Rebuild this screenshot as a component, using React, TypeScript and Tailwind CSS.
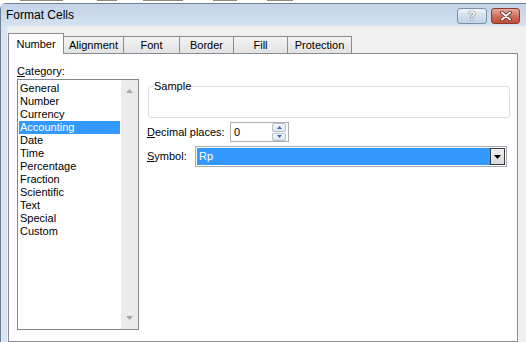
import React from "react";

const categories = [
  "General",
  "Number",
  "Currency",
  "Accounting",
  "Date",
  "Time",
  "Percentage",
  "Fraction",
  "Scientific",
  "Text",
  "Special",
  "Custom",
];

const tabs = [
  { label: "Alignment", width: "w-[60px]" },
  { label: "Font", width: "w-[56px]" },
  { label: "Border", width: "w-[54px]" },
  { label: "Fill", width: "w-[54px]" },
  { label: "Protection", width: "w-[64px]" },
];

// bits of the sheet behind the dialog, cut off by the window edge
const fragments = [
  { ml: "ml-[20px]", w: "w-[43px]" },
  { ml: "ml-[34px]", w: "w-[20px]" },
  { ml: "ml-[26px]", w: "w-[40px]" },
  { ml: "ml-[30px]", w: "w-[24px]" },
  { ml: "ml-[30px]", w: "w-[26px]" },
];

function TitleButtons() {
  return (
    <div className="ml-auto mr-[20px] mt-[4px] flex gap-[4px] self-start">
      <div className="flex h-[16px] w-[30px] items-center justify-center rounded-[3px] border border-[#7d8ea5] bg-gradient-to-b from-[#eef3f9] via-[#d3dfec] to-[#c1d2e6]">
        <span className="text-[12px] font-bold leading-none text-white [text-shadow:0_0_1px_#3b4a5e,0_0_1px_#3b4a5e]">
          ?
        </span>
      </div>
      <div className="flex h-[16px] w-[29px] items-center justify-center rounded-[3px] border border-[#8a3a31] bg-gradient-to-b from-[#e7a99f] via-[#d0705f] to-[#c24a38]">
        <svg width="12" height="10" viewBox="0 0 12 10">
          <path d="M2 1.5 L10 8.5 M10 1.5 L2 8.5" stroke="#5a2019" strokeWidth="3.6" strokeLinecap="round" />
          <path d="M2 1.5 L10 8.5 M10 1.5 L2 8.5" stroke="#ffffff" strokeWidth="2" strokeLinecap="round" />
        </svg>
      </div>
    </div>
  );
}

function ListBox() {
  return (
    <div className="mt-[1px] flex h-[251px] w-[122px] border border-[#828790] bg-white">
      <div className="flex flex-1 flex-col px-[1px] pt-[2px]">
        {categories.map((c) => (
          <div
            key={c}
            className={
              c === "Accounting"
                ? "h-[13px] bg-[#3399ff] pl-[1px] leading-[13px] text-white"
                : "h-[13px] pl-[1px] leading-[13px] text-black"
            }
          >
            {c}
          </div>
        ))}
      </div>
      <div className="flex w-[17px] flex-col items-center justify-between bg-[#ebebeb] py-[9px]">
        <svg width="7" height="4" viewBox="0 0 7 4">
          <path d="M0 4 L3.5 0 L7 4 Z" fill="#a7a7a7" />
        </svg>
        <svg width="7" height="4" viewBox="0 0 7 4">
          <path d="M0 0 L3.5 4 L7 0 Z" fill="#a7a7a7" />
        </svg>
      </div>
    </div>
  );
}

function Spinner() {
  return (
    <div className="mr-[2px] flex h-[18px] w-[14px] flex-col gap-[1px]">
      <div className="flex flex-1 items-center justify-center rounded-[2px] border border-[#b5c0cf] bg-gradient-to-b from-[#f4f7fb] to-[#dde5ef]">
        <svg width="5" height="3" viewBox="0 0 5 3">
          <path d="M0 3 L2.5 0 L5 3 Z" fill="#3e6bb0" />
        </svg>
      </div>
      <div className="flex flex-1 items-center justify-center rounded-[2px] border border-[#b5c0cf] bg-gradient-to-b from-[#f4f7fb] to-[#dde5ef]">
        <svg width="5" height="3" viewBox="0 0 5 3">
          <path d="M0 0 L2.5 3 L5 0 Z" fill="#3e6bb0" />
        </svg>
      </div>
    </div>
  );
}

function NumberPage() {
  return (
    <div className="flex pl-[8px] pt-[11px]">
      <div className="flex w-[122px] flex-col">
        <div className="h-[13px] leading-[13px]">
          <span className="underline underline-offset-1">C</span>ategory:
        </div>
        <ListBox />
      </div>

      <div className="ml-[8px] flex w-[363px] flex-col pt-[15px]">
        <fieldset className="ml-[1px] h-[38px] rounded-[3px] border border-[#d5dfe5] px-[5px]">
          <legend className="leading-[13px]">Sample</legend>
        </fieldset>

        <div className="mt-[4px] flex h-[20px] items-center">
          <div className="w-[83px] leading-[13px]">
            <span className="underline underline-offset-1">D</span>ecimal places:
          </div>
          <div className="flex h-[20px] w-[59px] items-center border border-[#abadb3] bg-white">
            <span className="flex-1 pl-[3px] leading-[13px]">0</span>
            <Spinner />
          </div>
        </div>

        <div className="mt-[4px] flex h-[21px] items-center">
          <div className="w-[48px] leading-[13px]">
            <span className="underline underline-offset-1">S</span>ymbol:
          </div>
          <div className="flex h-[21px] w-[312px] border border-[#a5acb5] bg-white p-[1px]">
            <div className="flex flex-1 items-center bg-[#3399ff] pl-[2px] leading-[13px] text-white">
              Rp
            </div>
            <div className="flex w-[15px] items-center justify-center border border-[#3c3c3c] bg-gradient-to-b from-[#f2f2f2] to-[#d9d9d9]">
              <svg width="7" height="4" viewBox="0 0 7 4">
                <path d="M0 0 L3.5 4 L7 0 Z" fill="#000000" />
              </svg>
            </div>
          </div>
        </div>
      </div>
    </div>
  );
}

export default function App() {
  return (
    <div className="flex h-[342px] w-[526px] flex-col overflow-hidden bg-white font-['Liberation_Sans',Arial,sans-serif] text-[11px] text-black">
      <div className="flex h-[3px] shrink-0 items-start">
        {fragments.map((f, i) => (
          <div key={i} className={`${f.ml} ${f.w} h-[1px] shrink-0 bg-[#8a8a8a]`} />
        ))}
      </div>

      <div className="flex w-[540px] flex-1 shrink-0 flex-col rounded-tl-[6px] border-l border-t border-[#6f8093] bg-[#d8e4f1]">
        <div className="flex h-[22px] shrink-0 bg-gradient-to-b from-[#c2d4e9] to-[#d4e2f1]">
          <div className="pl-[5px] pt-[3px] text-[12px] leading-[16px] text-black">Format Cells</div>
          <TitleButtons />
        </div>

        <div className="ml-[6px] flex flex-1 flex-col bg-[#f0f0f0] pt-[7px]">
          <div className="relative z-10 -mb-px ml-[1px] flex items-end">
            <div className="flex h-[21px] w-[56px] items-center justify-center border-x border-t border-[#898c95] bg-white">
              Number
            </div>
            {tabs.map((t) => (
              <div
                key={t.label}
                className={`${t.width} flex h-[18px] items-center justify-center border-b border-r border-t border-[#898c95] bg-gradient-to-b from-[#f3f3f3] to-[#e2e2e2]`}
              >
                {t.label}
              </div>
            ))}
          </div>

          <div className="ml-[1px] w-[510px] flex-1 border border-[#898c95] bg-white">
            <NumberPage />
          </div>
        </div>
      </div>
    </div>
  );
}
